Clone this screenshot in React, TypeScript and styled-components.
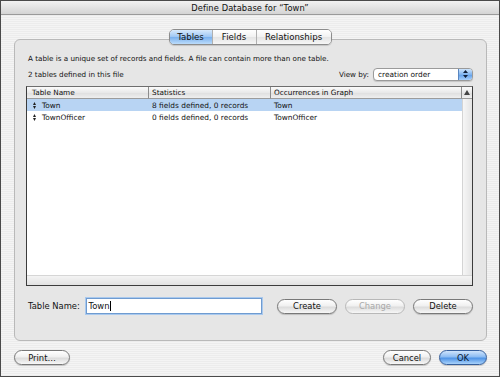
import React from "react";
import styled, { createGlobalStyle, css } from "styled-components";

const GlobalStyle = createGlobalStyle`
  html, body {
    margin: 0;
    padding: 0;
    background: #ffffff;
  }
  body {
    font-family: "DejaVu Sans", "Liberation Sans", sans-serif;
    color: #111;
  }
`;

const Window = styled.div`
  width: 500px;
  height: 377px;
  box-sizing: border-box;
  border: 1px solid #4a4a4a;
  background: repeating-linear-gradient(to bottom, #ececec 0 1px, #f4f4f4 1px 2px);
  display: flex;
  flex-direction: column;
`;

const TitleBar = styled.div`
  height: 13px;
  flex: none;
  background: linear-gradient(#f2f2f2, #d4d4d4);
  border-bottom: 1px solid #9a9a9a;
  display: flex;
  align-items: center;
  justify-content: center;
  font-size: 8.3px;
  letter-spacing: 0.1px;
`;

const Body = styled.div`
  padding-top: 14px;
  display: flex;
  flex-direction: column;
`;

const TabBar = styled.div`
  position: relative;
  z-index: 1;
  align-self: center;
  display: flex;
  height: 14px;
  margin-bottom: -6px;
  border: 1px solid #8c8c8c;
  border-radius: 5px;
  overflow: hidden;
  box-shadow: 0 1px 1px rgba(0, 0, 0, 0.15);
`;

const Tab = styled.div<{ $active?: boolean; $w: number }>`
  width: ${(p) => p.$w}px;
  display: flex;
  align-items: center;
  justify-content: center;
  font-size: 8.6px;
  background: linear-gradient(#ffffff, #f1f1f1 50%, #e4e4e4 51%, #f6f6f6);
  & + & {
    border-left: 1px solid #b0b0b0;
  }
  ${(p) =>
    p.$active &&
    css`
      background: linear-gradient(#d8eafc, #9cc6f4 50%, #78b0ee 51%, #bcdcfb);
    `}
`;

const GroupBox = styled.div`
  margin-left: 13px;
  width: 473px;
  height: 302px;
  box-sizing: border-box;
  border: 1px solid #b9b9b9;
  border-radius: 6px;
  background: #e6e6e6;
  padding: 13px 13px 0 11px;
  display: flex;
  flex-direction: column;
`;

const Info = styled.div`
  height: 12px;
  line-height: 12px;
  padding-left: 2px;
  font-size: 7.2px;
`;

const CountRow = styled.div`
  margin-top: 2px;
  height: 14px;
  display: flex;
  align-items: center;
  justify-content: space-between;
  font-size: 7.2px;
`;

const CountText = styled.span`
  padding-left: 2px;
`;

const ViewBy = styled.div`
  display: flex;
  align-items: center;
  gap: 4px;
`;

const Popup = styled.div`
  width: 100px;
  height: 13px;
  box-sizing: border-box;
  border: 1px solid #9a9a9a;
  border-radius: 4px;
  background: #fff;
  display: flex;
  align-items: center;
  overflow: hidden;
  font-size: 7.4px;
  box-shadow: 0 1px 1px rgba(0, 0, 0, 0.15);
`;

const PopupText = styled.span`
  flex: 1;
  padding-left: 4px;
`;

const PopupCap = styled.span`
  width: 13px;
  height: 100%;
  display: flex;
  align-items: center;
  justify-content: center;
  background: linear-gradient(#cde4fc, #7fb3ee 50%, #5d9de8 51%, #a9d0fa);
  border-left: 1px solid #5a86c0;
`;

const List = styled.div`
  margin-top: 5px;
  height: 200px;
  box-sizing: border-box;
  border: 1px solid #3c3c3c;
  border-top-color: #6e6e6e;
  background: #fff;
  display: grid;
  grid-template-columns: 122px 122px 191px 1fr;
  grid-template-rows: 12px 12px 12px 1fr 10px;
`;

const HeadCell = styled.div<{ $pad: number }>`
  display: flex;
  align-items: center;
  padding-left: ${(p) => p.$pad}px;
  font-size: 7.3px;
  background: linear-gradient(#fbfbfb, #e9e9e9 50%, #dedede 51%, #efefef);
  border-bottom: 1px solid #9c9c9c;
  border-right: 1px solid #8c8c8c;
  box-sizing: border-box;
`;

const ScrollHead = styled.div`
  display: flex;
  align-items: center;
  justify-content: center;
  background: linear-gradient(#fbfbfb, #e9e9e9 50%, #dedede 51%, #efefef);
  border-bottom: 1px solid #9c9c9c;
`;

const Cell = styled.div<{ $sel?: boolean; $pad: number }>`
  display: flex;
  align-items: center;
  gap: 6px;
  padding-left: ${(p) => p.$pad}px;
  font-size: 7.4px;
  background: ${(p) => (p.$sel ? "#b8d4f3" : "#ffffff")};
`;

const ScrollTrack = styled.div`
  grid-column: 4;
  grid-row: 2 / 5;
  background: linear-gradient(to right, #f6f6f6, #e4e4e4);
  border-left: 1px solid #d4d4d4;
`;

const EmptyArea = styled.div`
  grid-column: 1 / 4;
  grid-row: 4;
  background: #fff;
`;

const BottomBand = styled.div`
  grid-column: 1 / 5;
  grid-row: 5;
  background: linear-gradient(#f4f4f4, #e2e2e2);
  border-top: 1px solid #d6d6d6;
`;

const NameRow = styled.div`
  margin-top: 12px;
  height: 16px;
  display: flex;
  align-items: center;
`;

const NameLabel = styled.label`
  padding-left: 2px;
  width: 58px;
  font-size: 8.4px;
`;

const NameInput = styled.div`
  width: 178px;
  height: 16px;
  box-sizing: border-box;
  border: 1px solid #6f9bd0;
  box-shadow: 0 0 0 1px #a9c9ee;
  background: #fff;
  display: flex;
  align-items: center;
  padding-left: 2px;
  font-size: 8.4px;
  margin-right: 15px;
`;

const Caret = styled.span`
  display: inline-block;
  width: 1px;
  height: 10px;
  background: #000;
  margin-left: 0.5px;
`;

const Buttons = styled.div<{ $gap: number }>`
  display: flex;
  align-items: center;
  gap: ${(p) => p.$gap}px;
`;

const Button = styled.div<{ $w: number; $disabled?: boolean; $primary?: boolean }>`
  width: ${(p) => p.$w}px;
  height: 15px;
  box-sizing: border-box;
  border: 1px solid #787878;
  border-radius: 8px;
  display: flex;
  align-items: center;
  justify-content: center;
  font-size: 8.4px;
  background: linear-gradient(#ffffff, #f0f0f0 45%, #dcdcdc 55%, #f7f7f7);
  box-shadow: 0 1px 1px rgba(0, 0, 0, 0.18);
  ${(p) =>
    p.$disabled &&
    css`
      color: #a9a9a9;
      border-color: #b8b8b8;
      box-shadow: none;
    `}
  ${(p) =>
    p.$primary &&
    css`
      border-color: #365f9c;
      background: linear-gradient(#cfe4fc, #8cbcf3 45%, #4f94e6 55%, #a9d2fb);
      color: #0a1a33;
    `}
`;

const Footer = styled.div`
  margin-top: 9px;
  padding: 0 12px 0 13px;
  display: flex;
  align-items: center;
  justify-content: space-between;
`;

function Handle() {
  return (
    <svg width="3" height="7" viewBox="0 0 3 7">
      <path d="M1.5 0 L3 3 L0 3 Z M0 4 L3 4 L1.5 7 Z" fill="#222" />
    </svg>
  );
}

function PopupArrows() {
  return (
    <svg width="5" height="8" viewBox="0 0 5 8">
      <path d="M2.5 0 L5 3 L0 3 Z M0 5 L5 5 L2.5 8 Z" fill="#10203a" />
    </svg>
  );
}

function SortArrow() {
  return (
    <svg width="6" height="5" viewBox="0 0 6 5">
      <path d="M3 0 L6 5 L0 5 Z" fill="#444" />
    </svg>
  );
}

const tables = [
  { name: "Town", stats: "8 fields defined, 0 records", occ: "Town", sel: true },
  { name: "TownOfficer", stats: "0 fields defined, 0 records", occ: "TownOfficer", sel: false },
];

export default function App() {
  return (
    <>
      <GlobalStyle />
      <Window>
        <TitleBar>Define Database for “Town”</TitleBar>
        <Body>
          <TabBar>
            <Tab $active $w={42}>Tables</Tab>
            <Tab $w={43}>Fields</Tab>
            <Tab $w={74}>Relationships</Tab>
          </TabBar>
          <GroupBox>
            <Info>A table is a unique set of records and fields. A file can contain more than one table.</Info>
            <CountRow>
              <CountText>2 tables defined in this file</CountText>
              <ViewBy>
                View by:
                <Popup>
                  <PopupText>creation order</PopupText>
                  <PopupCap>
                    <PopupArrows />
                  </PopupCap>
                </Popup>
              </ViewBy>
            </CountRow>
            <List>
              <HeadCell $pad={5}>Table Name</HeadCell>
              <HeadCell $pad={3}>Statistics</HeadCell>
              <HeadCell $pad={3}>Occurrences in Graph</HeadCell>
              <ScrollHead>
                <SortArrow />
              </ScrollHead>
              {tables.map((t) => (
                <React.Fragment key={t.name}>
                  <Cell $sel={t.sel} $pad={6}>
                    <Handle />
                    {t.name}
                  </Cell>
                  <Cell $sel={t.sel} $pad={3}>{t.stats}</Cell>
                  <Cell $sel={t.sel} $pad={3}>{t.occ}</Cell>
                </React.Fragment>
              ))}
              <ScrollTrack />
              <EmptyArea />
              <BottomBand />
            </List>
            <NameRow>
              <NameLabel>Table Name:</NameLabel>
              <NameInput>
                Town
                <Caret />
              </NameInput>
              <Buttons $gap={8}>
                <Button $w={60}>Create</Button>
                <Button $w={60} $disabled>Change</Button>
                <Button $w={60}>Delete</Button>
              </Buttons>
            </NameRow>
          </GroupBox>
          <Footer>
            <Button $w={56}>Print…</Button>
            <Buttons $gap={8}>
              <Button $w={48}>Cancel</Button>
              <Button $w={48} $primary>OK</Button>
            </Buttons>
          </Footer>
        </Body>
      </Window>
    </>
  );
}
